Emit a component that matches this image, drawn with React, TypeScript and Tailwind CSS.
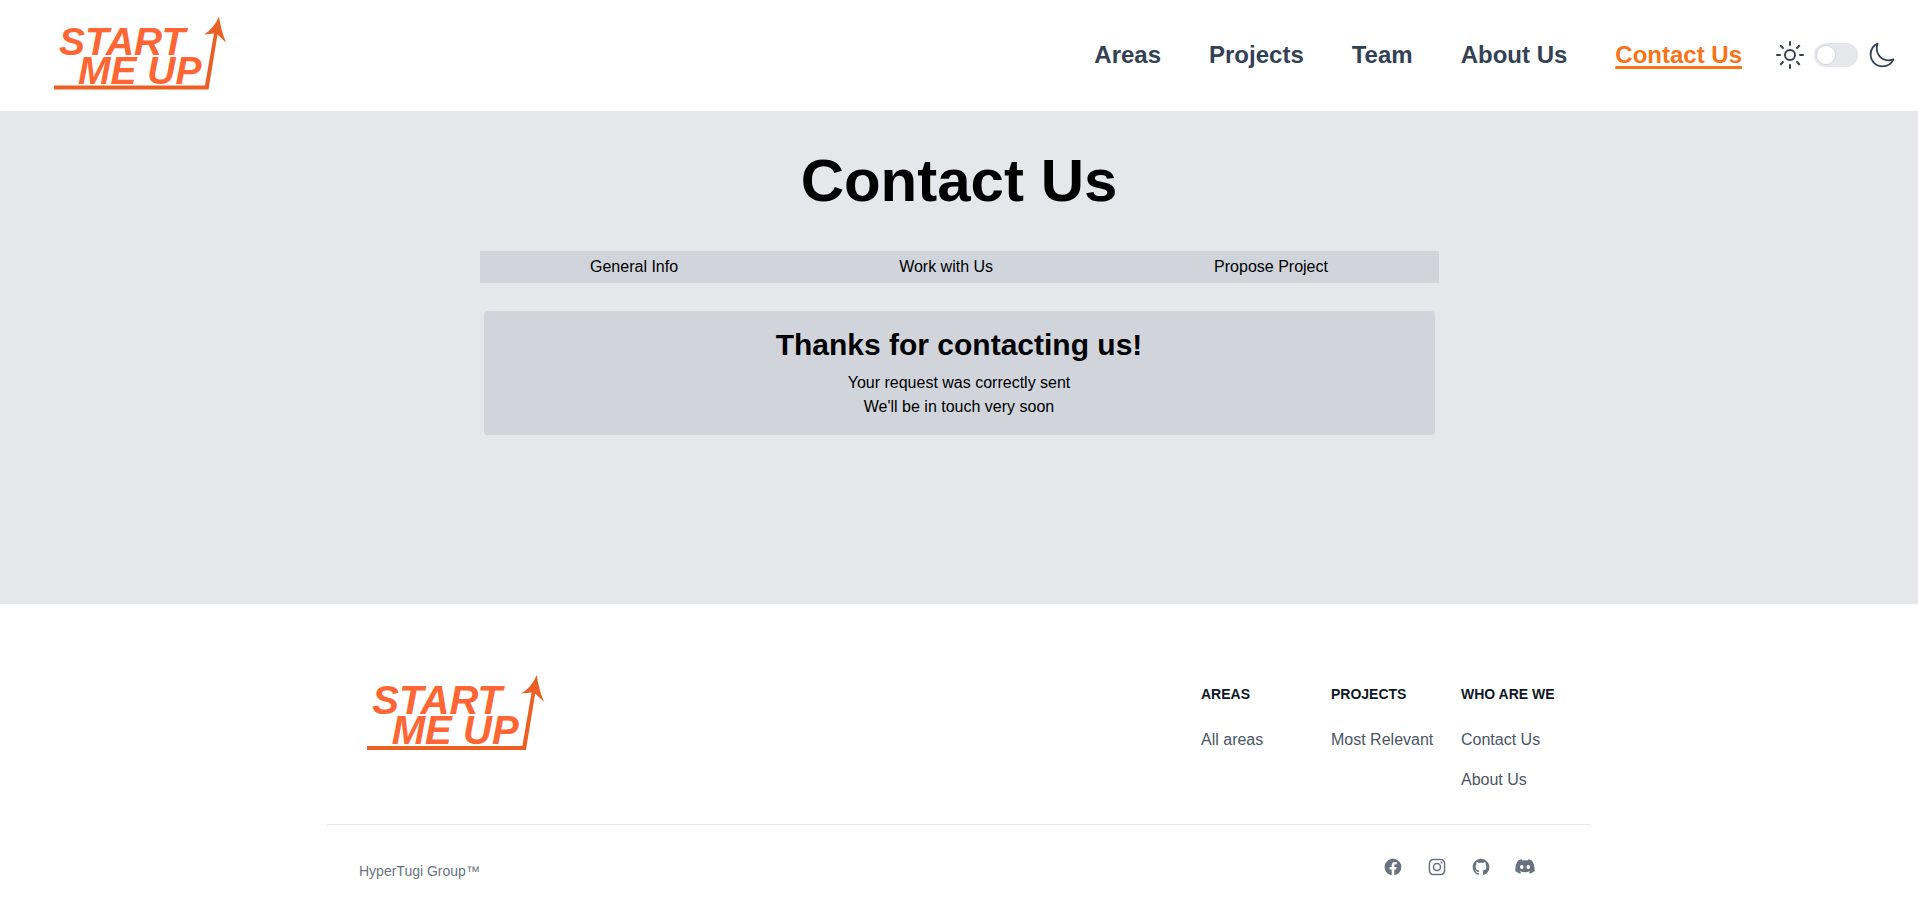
import { useState } from "react";
import { IoMoonOutline, IoSunnyOutline } from "react-icons/io5";

const navLinks = ["Areas", "Projects", "Team", "About Us"];
const tabs = ["General Info", "Work with Us", "Propose Project"];
const footerColumns = [
  { title: "Areas", links: ["All areas"] },
  { title: "Projects", links: ["Most Relevant"] },
  { title: "Who are we", links: ["Contact Us", "About Us"] },
];

const socials = [
  {
    name: "Facebook",
    path: "M22 12c0-5.523-4.477-10-10-10S2 6.477 2 12c0 4.991 3.657 9.128 8.438 9.878v-6.987h-2.54V12h2.54V9.797c0-2.506 1.492-3.89 3.777-3.89 1.094 0 2.238.195 2.238.195v2.46h-1.26c-1.243 0-1.63.771-1.63 1.562V12h2.773l-.443 2.89h-2.33v6.988C18.343 21.128 22 16.991 22 12z",
  },
  {
    name: "Instagram",
    path: "M12.315 2c2.43 0 2.784.013 3.808.06 1.064.049 1.791.218 2.427.465a4.902 4.902 0 011.772 1.153 4.902 4.902 0 011.153 1.772c.247.636.416 1.363.465 2.427.048 1.067.06 1.407.06 4.123v.08c0 2.643-.012 2.987-.06 4.043-.049 1.064-.218 1.791-.465 2.427a4.902 4.902 0 01-1.153 1.772 4.902 4.902 0 01-1.772 1.153c-.636.247-1.363.416-2.427.465-1.067.048-1.407.06-4.123.06h-.08c-2.643 0-2.987-.012-4.043-.06-1.064-.049-1.791-.218-2.427-.465a4.902 4.902 0 01-1.772-1.153 4.902 4.902 0 01-1.153-1.772c-.247-.636-.416-1.363-.465-2.427-.047-1.024-.06-1.379-.06-3.808v-.63c0-2.43.013-2.784.06-3.808.049-1.064.218-1.791.465-2.427a4.902 4.902 0 011.153-1.772A4.902 4.902 0 015.45 2.525c.636-.247 1.363-.416 2.427-.465C8.901 2.013 9.256 2 11.685 2h.63zm-.081 1.802h-.468c-2.456 0-2.784.011-3.807.058-.975.045-1.504.207-1.857.344-.467.182-.8.398-1.15.748-.35.35-.566.683-.748 1.15-.137.353-.3.882-.344 1.857-.047 1.023-.058 1.351-.058 3.807v.468c0 2.456.011 2.784.058 3.807.045.975.207 1.504.344 1.857.182.466.399.8.748 1.15.35.35.683.566 1.15.748.353.137.882.3 1.857.344 1.054.048 1.37.058 4.041.058h.08c2.597 0 2.917-.01 3.96-.058.976-.045 1.505-.207 1.858-.344.466-.182.8-.398 1.15-.748.35-.35.566-.683.748-1.15.137-.353.3-.882.344-1.857.048-1.055.058-1.37.058-4.041v-.08c0-2.597-.01-2.917-.058-3.96-.045-.976-.207-1.505-.344-1.858a3.097 3.097 0 00-.748-1.15 3.098 3.098 0 00-1.15-.748c-.353-.137-.882-.3-1.857-.344-1.023-.047-1.351-.058-3.807-.058zM12 6.865a5.135 5.135 0 110 10.27 5.135 5.135 0 010-10.27zm0 1.802a3.333 3.333 0 100 6.666 3.333 3.333 0 000-6.666zm5.338-3.205a1.2 1.2 0 110 2.4 1.2 1.2 0 010-2.4z",
  },
  {
    name: "GitHub",
    path: "M12 2C6.477 2 2 6.484 2 12.017c0 4.425 2.865 8.18 6.839 9.504.5.092.682-.217.682-.483 0-.237-.008-.868-.013-1.703-2.782.605-3.369-1.343-3.369-1.343-.454-1.158-1.11-1.466-1.11-1.466-.908-.62.069-.608.069-.608 1.003.07 1.531 1.032 1.531 1.032.892 1.53 2.341 1.088 2.91.832.092-.647.35-1.088.636-1.338-2.22-.253-4.555-1.113-4.555-4.951 0-1.093.39-1.988 1.029-2.688-.103-.253-.446-1.272.098-2.65 0 0 .84-.27 2.75 1.026A9.564 9.564 0 0112 6.844c.85.004 1.705.115 2.504.337 1.909-1.296 2.747-1.027 2.747-1.027.546 1.379.202 2.398.1 2.651.64.7 1.028 1.595 1.028 2.688 0 3.848-2.339 4.695-4.566 4.943.359.309.678.92.678 1.855 0 1.338-.012 2.419-.012 2.747 0 .268.18.58.688.482A10.019 10.019 0 0022 12.017C22 6.484 17.522 2 12 2z",
  },
  {
    name: "Discord",
    path: "M20.3 4.2A18 18 0 0 0 15.700 2.800l-.7 1.300a17 17 0 0 0-6 0l-.7-1.300A18 18 0 0 0 3.700 4.200C.8 8.500.1 12.800.5 17.200a18 18 0 0 0 5.600 2.800l1.200-2-1.900-.9.500-.4a13 13 0 0 0 12.200 0l.5.4-1.900.9 1.200 2a18 18 0 0 0 5.600-2.800c.5-5-.8-9.300-3.200-13zM8.100 14.500c-1.200 0-2.100-1.100-2.100-2.400s.9-2.400 2.100-2.400 2.200 1.100 2.100 2.400-.9 2.400-2.100 2.400zm7.800 0c-1.200 0-2.100-1.100-2.100-2.400s.9-2.400 2.100-2.400 2.200 1.100 2.100 2.400-.9 2.400-2.100 2.400z",
  },
];

function Logo({ className }: { className: string }) {
  return (
    <svg viewBox="0 0 174 74" className={className} role="img" aria-label="Start Me Up">
      <g
        className="fill-[#ff6633] font-['Liberation_Sans',Arial,sans-serif] font-bold italic"
        fontSize="39"
      >
        <text x="5" y="38">START</text>
        <text x="24" y="67">ME UP</text>
      </g>
      <path d="M0 69H151L160 17L150 18Q160 12 165 0Q167 14 172 26L163.500 18L154.500 73H0Z" fill="#ec5f22" />
    </svg>
  );
}

export default function App() {
  const [dark, setDark] = useState(false);
  return (
    <div className="flex min-h-screen flex-col bg-white font-['Liberation_Sans',Arial,sans-serif] text-black">
      <header className="flex items-center justify-between pt-[15px] pr-[22px] pb-[17px] pl-[54px]">
        <a href="#" className="pt-px pb-[3px]">
          <Logo className="h-[75px] w-[174px]" />
        </a>
        <div className="flex items-center">
          <nav className="flex gap-12 text-2xl font-bold text-[#334155]">
            {navLinks.map((l) => (
              <a key={l} href="#">{l}</a>
            ))}
            <a href="#" aria-current="page" className="text-[#f97316] underline decoration-3 underline-offset-3">
              Contact Us
            </a>
          </nav>
          <div className="ml-8 flex items-center text-[#334155]">
            <IoSunnyOutline size={32} />
            <label className="relative mr-2.5 ml-2 flex cursor-pointer">
              <input
                type="checkbox"
                aria-label="Dark mode"
                checked={dark}
                onChange={(e) => setDark(e.target.checked)}
                className="peer sr-only"
              />
              <span className="flex h-6 w-11 items-center rounded-full bg-gray-200 p-0.5 peer-checked:justify-end peer-checked:bg-orange-500">
                <span className="size-5 rounded-full border border-gray-300 bg-white" />
              </span>
            </label>
            <IoMoonOutline size={28} />
          </div>
        </div>
      </header>

      <main className="flex grow flex-col items-center bg-[#e5e7eb] pt-10">
        <h1 className="text-6xl leading-none font-bold">Contact Us</h1>
        <div className="mt-10 flex w-1/2 justify-around bg-[#d1d5db] py-1">
          {tabs.map((t) => (
            <button key={t} type="button" className="cursor-pointer text-base">{t}</button>
          ))}
        </div>
        <div className="mt-6 w-1/2 p-1">
          <section className="rounded bg-[#d1d5db] p-4 text-center">
            <h2 className="mb-2 text-3xl font-bold">Thanks for contacting us!</h2>
            <p>Your request was correctly sent</p>
            <p>We'll be in touch very soon</p>
          </section>
        </div>
      </main>

      <footer className="px-4 pt-16 pb-8">
        <div className="mx-auto max-w-[1264px]">
          <div className="flex justify-between px-8 pb-8">
            <a href="#" className="pt-1.5 pl-2">
              <Logo className="h-[78px] w-[179px]" />
            </a>
            <div className="grid grid-cols-3 gap-8 pt-4">
              {footerColumns.map((c) => (
                <div key={c.title} className="w-[98px]">
                  <h2 className="mb-6 text-sm font-bold whitespace-nowrap text-gray-900 uppercase">{c.title}</h2>
                  <ul className="flex flex-col gap-4 text-gray-600">
                    {c.links.map((l) => (
                      <li key={l}>
                        <a href="#" className="whitespace-nowrap">{l}</a>
                      </li>
                    ))}
                  </ul>
                </div>
              ))}
            </div>
          </div>
          <hr className="border-gray-200" />
          <div className="flex items-start justify-between px-8 pt-8">
            <span className="pt-1 text-sm text-gray-500">HyperTugi Group™</span>
            <div className="flex gap-6 pr-6 text-gray-500">
              {socials.map((s) => (
                <a key={s.name} href="#" aria-label={s.name}>
                  <svg viewBox="0 0 24 24" fill="currentColor" fillRule="evenodd" className="size-5">
                    <path d={s.path} />
                  </svg>
                </a>
              ))}
            </div>
          </div>
        </div>
      </footer>
    </div>
  );
}
